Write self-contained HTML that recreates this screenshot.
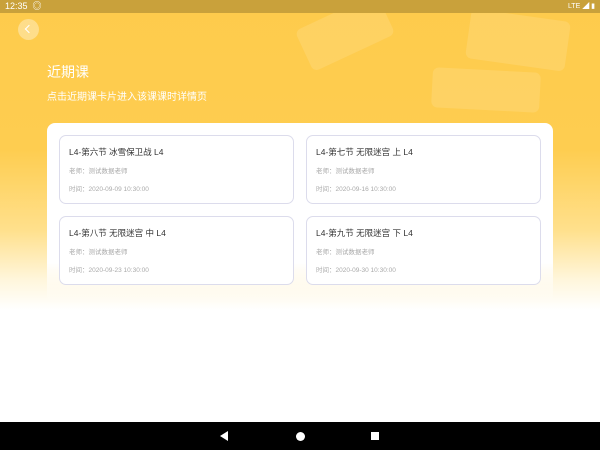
<!DOCTYPE html><html><head><meta charset="utf-8"><style>
*{margin:0;padding:0;box-sizing:border-box}
body{width:600px;height:450px;overflow:hidden;position:relative;font-family:"Liberation Sans","Noto Sans CJK SC",sans-serif;background:linear-gradient(180deg,#fecb4c 0px,#fecd50 150px,#ffe08c 230px,#fff6dc 280px,#fff 310px)}
.sb{position:absolute;top:0;left:0;width:600px;height:13px;background:#c9a13b;color:#fff;font-size:9px;line-height:13px;padding-left:5px}
.shape{position:absolute;background:rgba(255,255,255,.12);border-radius:6px}
.back{position:absolute;left:18px;top:19px;width:21px;height:21px;border-radius:50%;background:rgba(255,255,255,.35)}
.back:after{content:"";position:absolute;left:8px;top:7px;width:5px;height:5px;border-left:1.5px solid #fff;border-bottom:1.5px solid #fff;transform:rotate(45deg)}
h1{position:absolute;left:47px;top:62px;color:#fff;font-size:14px;font-weight:normal}
.sub{position:absolute;left:47px;top:88px;color:#fff;font-size:10px}
.panel{position:absolute;left:47px;top:123px;width:506px;height:180px;background:linear-gradient(#fff 0,#fff 140px,rgba(255,255,255,0));border-radius:8px}
.card{position:absolute;width:235px;height:69px;border:1px solid #dcdcec;border-radius:7px;background:#fff;padding:10px 9px}
.t{font-size:8.5px;color:#333}
.g{font-size:6.5px;color:#aaa;margin-top:7px}
.g2{font-size:6.5px;color:#aaa;margin-top:8px}
.nav{position:absolute;left:0;top:422px;width:600px;height:28px;background:#000}
</style></head><body>
<div class="shape" style="left:300px;top:10px;width:90px;height:45px;transform:rotate(-25deg)"></div>
<div class="shape" style="left:468px;top:15px;width:100px;height:50px;transform:rotate(8deg)"></div>
<div class="shape" style="left:432px;top:70px;width:108px;height:40px;transform:rotate(3deg)"></div>
<div class="sb">12:35 &nbsp;◎<span style="position:absolute;right:5px;font-size:7px">LTE ◢ ▮</span></div>
<div class="back"></div>
<h1>近期课</h1>
<div class="sub">点击近期课卡片进入该课课时详情页</div>
<div class="panel"></div>
<div class="card" style="left:59px;top:135px"><div class="t">L4-第六节 冰雪保卫战 L4</div><div class="g">老师：测试数据老师</div><div class="g2">时间：2020-09-09 10:30:00</div></div>
<div class="card" style="left:306px;top:135px"><div class="t">L4-第七节 无限迷宫 上 L4</div><div class="g">老师：测试数据老师</div><div class="g2">时间：2020-09-16 10:30:00</div></div>
<div class="card" style="left:59px;top:216px"><div class="t">L4-第八节 无限迷宫 中 L4</div><div class="g">老师：测试数据老师</div><div class="g2">时间：2020-09-23 10:30:00</div></div>
<div class="card" style="left:306px;top:216px"><div class="t">L4-第九节 无限迷宫 下 L4</div><div class="g">老师：测试数据老师</div><div class="g2">时间：2020-09-30 10:30:00</div></div>
<div class="nav">
<div style="position:absolute;left:220px;top:9px;width:0;height:0;border-top:5px solid transparent;border-bottom:5px solid transparent;border-right:8px solid #fff"></div>
<div style="position:absolute;left:296px;top:10px;width:9px;height:9px;border-radius:50%;background:#fff"></div>
<div style="position:absolute;left:371px;top:10px;width:8px;height:8px;background:#fff"></div>
</div>
</body></html>
